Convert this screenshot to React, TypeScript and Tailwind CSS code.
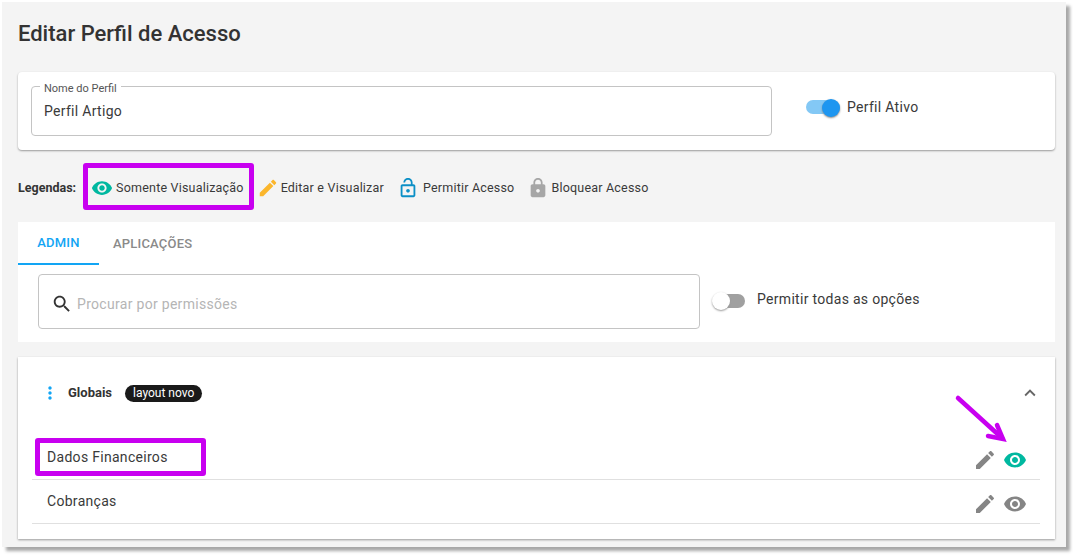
const P = {
  eye: "M12 4.5C7 4.5 2.73 7.61 1 12c1.73 4.39 6 7.5 11 7.5s9.27-3.11 11-7.5c-1.73-4.39-6-7.5-11-7.5zM12 17c-2.76 0-5-2.24-5-5s2.24-5 5-5 5 2.24 5 5-2.24 5-5 5zm0-8c-1.66 0-3 1.34-3 3s1.34 3 3 3 3-1.34 3-3-1.34-3-3-3z",
  edit: "M3 17.25V21h3.75L17.81 9.94l-3.75-3.75L3 17.25zM20.71 7.04c.39-.39.39-1.02 0-1.41l-2.34-2.34c-.39-.39-1.02-.39-1.41 0l-1.83 1.83 3.75 3.75 1.83-1.83z",
  lock: "M18 8h-1V6c0-2.76-2.24-5-5-5S7 3.24 7 6v2H6c-1.1 0-2 .9-2 2v10c0 1.1.9 2 2 2h12c1.1 0 2-.9 2-2V10c0-1.1-.9-2-2-2zm-6 9c-1.1 0-2-.9-2-2s.9-2 2-2 2 .9 2 2-.9 2-2 2zm3.1-9H8.9V6c0-1.71 1.39-3.1 3.1-3.1 1.71 0 3.1 1.39 3.1 3.1v2z",
  open: "M12 17c1.1 0 2-.9 2-2s-.9-2-2-2-2 .9-2 2 .9 2 2 2zm6-9h-1V6c0-2.76-2.24-5-5-5S7 3.24 7 6h1.9c0-1.71 1.39-3.1 3.1-3.1 1.71 0 3.1 1.39 3.1 3.1v2H6c-1.1 0-2 .9-2 2v10c0 1.1.9 2 2 2h12c1.1 0 2-.9 2-2V10c0-1.1-.9-2-2-2zm0 12H6V10h12v10z",
  search: "M15.5 14h-.79l-.28-.27C15.41 12.59 16 11.11 16 9.5 16 5.91 13.09 3 9.5 3S3 5.91 3 9.5 5.91 16 9.5 16c1.61 0 3.09-.59 4.23-1.57l.27.28v.79l5 4.99L20.49 19l-4.99-5zm-6 0C7.01 14 5 11.99 5 9.5S7.01 5 9.5 5 14 7.01 14 9.5 11.99 14 9.5 14z",
  up: "M12 8l-6 6 1.41 1.41L12 10.83l4.59 4.58L18 14z",
  more: "M12 8c1.1 0 2-.9 2-2s-.9-2-2-2-2 .9-2 2 .9 2 2 2zm0 2c-1.1 0-2 .9-2 2s.9 2 2 2 2-.9 2-2-.9-2-2-2zm0 6c-1.1 0-2 .9-2 2s.9 2 2 2 2-.9 2-2-.9-2-2-2z",
};

function Icon({ d, className }: { d: string; className: string }) {
  return (
    <svg viewBox="0 0 24 24" className={className} fill="currentColor">
      <path d={d} />
    </svg>
  );
}

function Row({ label, active }: { label: string; active?: boolean }) {
  return (
    <div className="flex h-[44px] items-center justify-between border-b border-[#e0e0e0] pl-[15px] pr-[13px]">
      <span className="text-[14px] tracking-[0.3px] text-[#3a3a3a]">{label}</span>
      <div className="mt-[5px] flex items-center gap-[6px]">
        <Icon d={P.edit} className="h-[24px] w-[24px] text-[#858585]" />
        <Icon d={P.eye} className={active ? "h-[24px] w-[24px] text-[#00b8a0]" : "h-[24px] w-[24px] text-[#858585]"} />
      </div>
    </div>
  );
}

export default function App() {
  return (
    <div className="relative h-[555px] w-[1073px] overflow-hidden bg-white pl-[2px] pt-[2px] font-['Roboto',sans-serif]">
      <div className="h-[545px] w-[1064px] bg-[#f4f4f4] px-[16px] pt-[19px] shadow-[4px_4px_3px_#a8a8a8]">
        <h1 className="h-[26px] text-[22px] font-medium leading-[26px] text-[#333333]">Editar Perfil de Acesso</h1>

        <section className="mt-[25px] flex h-[78px] w-[1037px] items-center rounded-[4px] bg-white pl-[13px] shadow-[0_1px_2px_#9a9a9a]">
          <div className="relative flex h-[50px] w-[741px] items-center rounded-[4px] border border-[#c4c4c4] pl-[12px]">
            <span className="absolute -top-[5px] left-[8px] bg-white px-[4px] text-[11px] leading-[13px] text-[#555555]">Nome do Perfil</span>
            <span className="mt-[1px] text-[14px] tracking-[0.3px] text-[#3a3a3a]">Perfil Artigo</span>
          </div>
          <div className="relative -mt-[8px] ml-[34px] h-[14px] w-[34px] rounded-full bg-[#83c8f5]">
            <div className="absolute -top-[1px] right-[0px] h-[18px] w-[18px] rounded-full bg-[#1e96f0] shadow-[0_1px_2px_#888]" />
          </div>
          <span className="-mt-[8px] ml-[7px] text-[14px] tracking-[0.3px] text-[#3a3a3a]">Perfil Ativo</span>
        </section>

        <div className="mt-[25px] flex h-[26px] items-center text-[12.5px] text-[#3a3a3a]">
          <span className="text-[12.5px] font-bold text-[#333333]">Legendas:</span>
          <Icon d={P.eye} className="ml-[15px] h-[22px] w-[22px] text-[#00b8a0]" />
          <span className="ml-[3px] tracking-[0.2px]">Somente Visualização</span>
          <Icon d={P.edit} className="ml-[13px] h-[22px] w-[22px] text-[#fbb62c]" />
          <span className="ml-[2px] tracking-[0.2px]">Editar e Visualizar</span>
          <Icon d={P.open} className="ml-[13px] h-[22px] w-[22px] text-[#0b8fc6]" />
          <span className="ml-[4px] tracking-[0.2px]">Permitir Acesso</span>
          <Icon d={P.lock} className="ml-[13px] h-[22px] w-[22px] text-[#a6a6a6]" />
          <span className="ml-[2px] tracking-[0.2px]">Bloquear Acesso</span>
        </div>

        <section className="mt-[21px] h-[120px] w-[1037px] bg-white">
          <div className="flex h-[43px] text-[13px] font-medium tracking-[0.2px]">
            <div className="flex w-[81px] items-center justify-center border-b-2 border-[#12a5f4] text-[#12a5f4]">ADMIN</div>
            <div className="ml-[14px] flex items-center text-[#8a8a8a]">APLICAÇÕES</div>
          </div>
          <div className="mt-[9px] flex items-center pl-[20px]">
            <div className="flex h-[55px] w-[662px] items-center rounded-[4px] border border-[#c4c4c4] pl-[12px] pt-[5px]">
              <Icon d={P.search} className="h-[22px] w-[22px] text-[#333333]" />
              <span className="ml-[4px] text-[14px] tracking-[0.3px] text-[#b5b5b5]">Procurar por permissões</span>
            </div>
            <div className="relative -mt-[2px] ml-[24px] h-[14px] w-[21px] rounded-r-full bg-[#a0a0a0]">
              <div className="absolute -left-[12px] -top-[2px] h-[18px] w-[18px] rounded-full bg-white shadow-[0_1px_2px_#999]" />
            </div>
            <span className="-mt-[4px] ml-[12px] text-[14px] tracking-[0.3px] text-[#3a3a3a]">Permitir todas as opções</span>
          </div>
        </section>

        <section className="mt-[15px] h-[182px] w-[1037px] bg-white px-[14px] shadow-[0_1px_2px_#9a9a9a]">
          <div className="flex h-[72px] items-center">
            <Icon d={P.more} className="ml-[8px] h-[20px] w-[20px] text-[#12a5f4]" />
            <span className="ml-[8px] text-[13px] font-bold text-[#333333]">Globais</span>
            <span className="ml-[13px] rounded-full bg-[#1a1a1a] px-[8px] text-[12px] leading-[17px] text-white">layout novo</span>
            <Icon d={P.up} className="ml-auto h-[22px] w-[22px] text-[#666666]" />
          </div>
          <div className="mt-[7px] w-[1008px]">
            <Row label="Dados Financeiros" active />
            <Row label="Cobranças" />
          </div>
        </section>
      </div>

      <div className="absolute left-[83px] top-[163px] h-[47px] w-[171px] rounded-[3px] border-[5px] border-[#c800f0]" />
      <div className="absolute left-[35px] top-[438px] h-[38px] w-[171px] rounded-[3px] border-[5px] border-[#c800f0]" />
      <svg className="absolute left-[950px] top-[390px] h-[55px] w-[60px]" viewBox="0 0 60 55" fill="none" stroke="#c800f0" strokeWidth="4.5" strokeLinecap="round">
        <path d="M8 8L52 48" />
        <path d="M47 35L53 49L38 46" />
      </svg>
    </div>
  );
}
